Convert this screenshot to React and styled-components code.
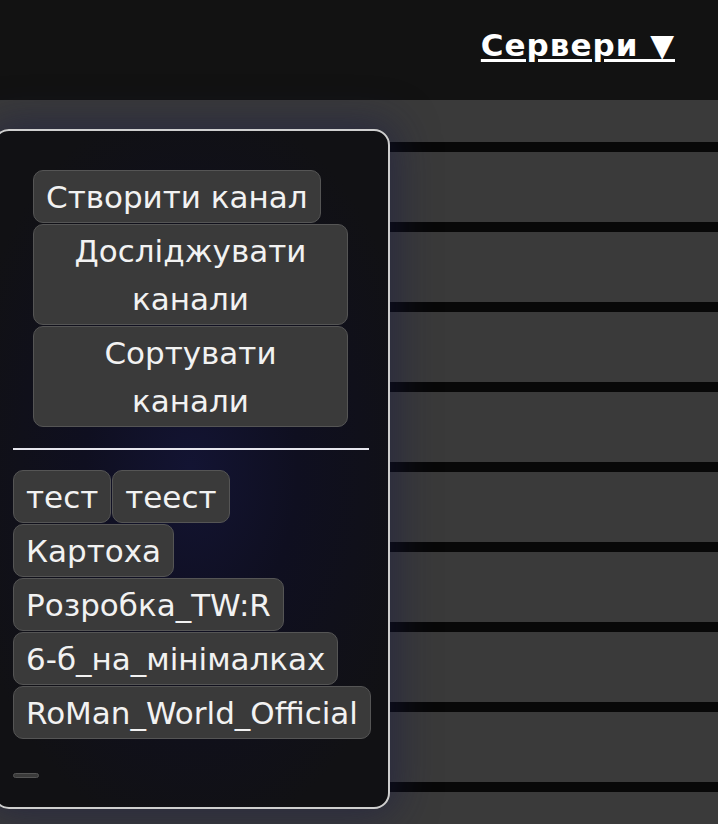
import React from "react"
import styled, {createGlobalStyle} from "styled-components"

const Global = createGlobalStyle`
    body {
        margin: 0;
        background: #3a3a3a;
        font-family: "DejaVu Sans", Verdana, sans-serif;
        color: #f2f2f2;
        overflow: hidden;
    }
`
const Header = styled.header`
    height: 100px;
    background: #121212;
    display: flex;
    justify-content: flex-end;
    align-items: center;
    padding: 0 43px 10px 0;
    box-sizing: border-box;
`
const ServersLink = styled.a`
    color: #fff;
    font-size: 31px;
    font-weight: bold;
    letter-spacing: 1px;
    text-decoration: underline;
    text-underline-offset: 3px;
    cursor: pointer;
`
const Main = styled.main`
    position: relative;
    padding-top: 42px;
`
const Row = styled.div`
    height: 70px;
    background: #3a3a3a;
    border-top: 10px solid #080808;
`
const Panel = styled.aside`
    position: absolute;
    top: 29px;
    left: -7px;
    width: 397px;
    box-sizing: border-box;
    padding: 39px 19px 29px 18px;
    border: 2px solid #cfcfcf;
    border-radius: 16px;
    background: radial-gradient(ellipse 60% 55% at 50% 50%, #131433 0%, #0f0f20 45%, #111114 100%);
    box-shadow: 0 0 40px 6px rgba(22, 24, 70, 0.5);
`
const Actions = styled.div`
    display: flex;
    flex-direction: column;
    align-items: flex-start;
    gap: 1px;
    margin-left: 20px;
`
const Button = styled.button`
    font-family: inherit;
    font-size: 31px;
    line-height: 48px;
    color: #f2f2f2;
    background: #3a3a3a;
    border: 1px solid #555;
    border-radius: 10px;
    padding: 1.5px 12px;
    text-align: center;
    max-width: ${p => (p.$wide ? "315px" : "none")};
    white-space: ${p => (p.$wide ? "normal" : "nowrap")};
    cursor: pointer;
`
const Divider = styled.hr`
    border: none;
    height: 2px;
    background: #e6e6ee;
    margin: 21px 0 20px;
`
const Tags = styled.div`
    display: flex;
    flex-wrap: wrap;
    gap: 1px;
`
const Spacer = styled.div`
    margin-top: 34px;
    display: flex;
`

const tags = ["тест", "теест", "Картоха", "Розробка_TW:R", "6-б_на_мінімалках", "RoMan_World_Official"]

const App = () => {
    return (
        <>
            <Global />
            <Header>
                <ServersLink>Сервери ▼</ServersLink>
            </Header>
            <Main>
                {Array.from({length: 10}).map((_, i) => <Row key={i} />)}
                <Panel>
                    <Actions>
                        <Button>Створити канал</Button>
                        <Button $wide>Досліджувати канали</Button>
                        <Button $wide>Сортувати канали</Button>
                    </Actions>
                    <Divider />
                    <Tags>
                        {tags.map(t => <Button key={t}>{t}</Button>)}
                    </Tags>
                    <Spacer>
                        <Button aria-label="empty" />
                    </Spacer>
                </Panel>
            </Main>
        </>
    )
}

export default App
